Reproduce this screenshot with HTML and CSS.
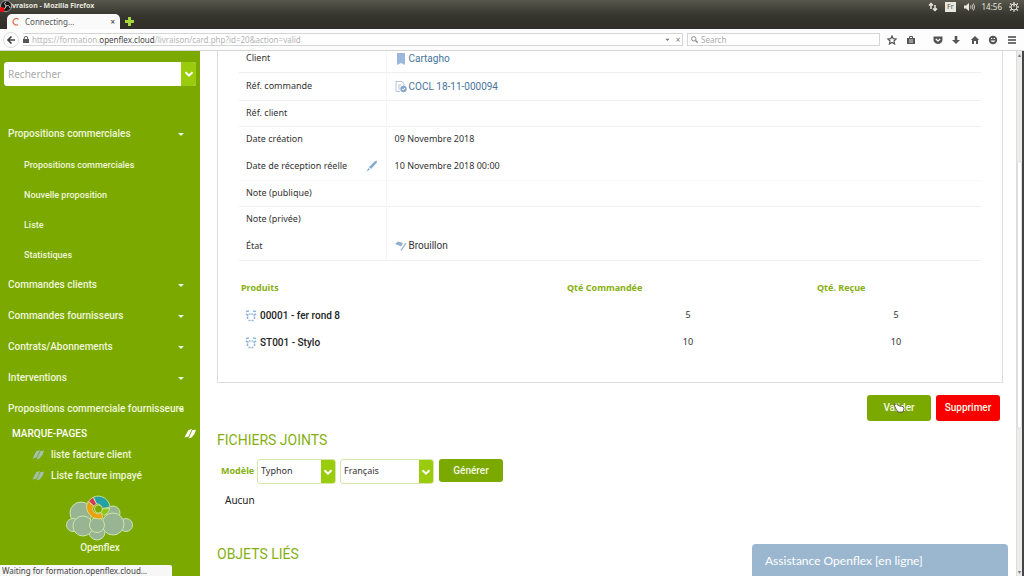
FILE: index.html
```html
<!DOCTYPE html>
<html lang="fr">
<head>
<meta charset="utf-8">
<title>Livraison - Mozilla Firefox</title>
<link rel="stylesheet" href="styles.css">
</head>
<body>
<svg class="defs" aria-hidden="true">
  <symbol id="caret" viewBox="0 0 10 10"><path d="M2 4h6L5 7z" fill="currentColor"/></symbol>
  <symbol id="chevron" viewBox="0 0 10 10"><path d="M1.500 3.200 5 6.600l3.500-3.400" fill="none" stroke="currentColor" stroke-width="2"/></symbol>
  <symbol id="book" viewBox="0 0 12 10"><path d="M4.500 1 8 0 4.500 7.500.500 8.500zM8.500 1 12 .800 10.500 5 7.500 8.500 4.500 9.500z" fill="currentColor"/></symbol>
  <symbol id="box" viewBox="0 0 12 12"><path d="M1 1.500l3-.5M8 1l3 .5M1 4l2.500 1.500M8.500 5.500 11 4M2.500 6.500V9M9.500 9V6.500M3.500 10.500h2M6.500 10.500h2M4 3.500l1.500 1M8 3.500l-1.500 1" fill="none" stroke="currentColor" stroke-width="1.500"/></symbol>
</svg>

<header class="browser">
  <div class="top">
    <div class="titlebar">
      <span class="title">Livraison - Mozilla Firefox</span>
      <div class="tray">
        <svg width="10" height="10" viewBox="0 0 10 10" fill="none" stroke="currentColor" stroke-width="1.500"><path d="M3 7V1.500M1 3.500l2-2 2 2M7 3v5.500M5 6.500l2 2 2-2"/></svg>
        <span class="lang">Fr</span>
        <svg width="12" height="10" viewBox="0 0 12 10"><path d="M1 3.500h2L6 1v8L3 6.500H1z" fill="currentColor"/><path d="M7.500 3.500q1 1.500 0 3M9 2.500q1.800 2.500 0 5M10.500 1.500q2.200 3.500 0 7" fill="none" stroke="currentColor" stroke-width=".8"/></svg>
        <span class="clock">14:56</span>
        <svg width="10" height="10" viewBox="0 0 10 10" fill="none" stroke="currentColor"><circle cx="5" cy="5" r="3"/><path d="M5 0v4.500M1.200 1.500 2.500 2.700M8.800 1.500 7.500 2.700M1.200 8.500 2.500 7.300M8.800 8.500 7.500 7.300M5 8.300v1.500M.200 5h1.500M8.300 5h1.500" stroke-width="1.300"/></svg>
      </div>
    </div>
    <div class="tabs">
      <div class="tab">
        <svg width="8" height="8" viewBox="0 0 8 8"><path d="M6.500 1.500A3.200 3.200 0 1 0 6 6.500" fill="none" stroke="#e0704a" stroke-width="1.200"/></svg>
        <span class="tab-name">Connecting…</span>
        <button class="plain" aria-label="Fermer l'onglet">×</button>
      </div>
      <button class="plain add" aria-label="Nouvel onglet"><svg width="9" height="9" viewBox="0 0 9 9"><path d="M3 0h3v3h3v3H6v3H3V6H0V3h3z" fill="#a5d63a"/></svg></button>
    </div>
  </div>
  <div class="toolbar">
    <button class="plain back" aria-label="Retour"><svg width="8" height="8" viewBox="0 0 8 8"><path d="M4.500.5 1 4l3.500 3.500M1 4h7" fill="none" stroke="#444" stroke-width="1.600"/></svg></button>
    <div class="urlbar">
      <svg width="6" height="7" viewBox="0 0 6 7"><path d="M0 3h6v4H0z" fill="#555"/><path d="M1.200 3V2q0-1.500 1.800-1.500T4.800 2v1" fill="none" stroke="#555"/></svg>
      <div class="url" role="textbox" aria-label="Adresse">https://formation.<b>openflex.cloud</b>/livraison/card.php?id=20&amp;action=valid</div>
      <svg width="7" height="7" viewBox="0 0 10 10" color="#777"><use href="#caret"/></svg>
      <button class="plain stop" aria-label="Arrêter">×</button>
    </div>
    <label class="websearch">
      <svg width="7" height="7" viewBox="0 0 7 7" fill="none" stroke="#888"><circle cx="2.800" cy="2.800" r="2.200"/><path d="M4.500 4.500 6.700 6.700" stroke-width="1.300"/></svg>
      <input type="text" placeholder="Search" aria-label="Search">
    </label>
    <div class="tools">
      <svg viewBox="0 0 10 10"><path d="M5 1l1.200 2.700 3 .3-2.200 2 .6 3L5 7.500 2.400 9 3 6 .8 4l3-.3z" fill="none" stroke="#555" stroke-width="1.200"/></svg>
      <svg viewBox="0 0 10 10"><path d="M1 3h8v6H1z" fill="#555"/><path d="M3.500 3V1.500h3V3" fill="none" stroke="#555"/><path d="M3 5h4M3 7h4" stroke="#fff" stroke-width=".8"/></svg>
      <i></i>
      <svg viewBox="0 0 10 10"><path d="M.5 1.500h9V5a4.500 4 0 0 1-9 0z" fill="#555"/><path d="M2.800 4 5 6l2.200-2" fill="none" stroke="#fff" stroke-width="1.200"/></svg>
      <svg viewBox="0 0 10 10"><path d="M3.700 1h2.600v4H9L5 9 1 5h2.700z" fill="#555"/></svg>
      <svg viewBox="0 0 10 10"><path d="M5 1 .8 5H2v4h2V6h2v3h2V5h1.200z" fill="#555"/></svg>
      <svg viewBox="0 0 10 10"><circle cx="5" cy="5" r="4.200" fill="#555"/><path d="M2.500 5.500q2.500 3 5 0z" fill="#fff"/><path d="M3 3.500h1.300M5.700 3.500H7" stroke="#fff"/></svg>
      <svg viewBox="0 0 10 10"><path d="M1 2h8M1 5h8M1 8h8" stroke="#444" stroke-width="1.600"/></svg>
    </div>
  </div>
</header>

<div class="page">
  <nav class="sidebar">
    <form class="search">
      <input type="text" placeholder="Rechercher" aria-label="Rechercher">
      <button type="button" aria-label="Options"><svg width="10" height="10"><use href="#chevron"/></svg></button>
    </form>
    <ul class="menu">
      <li><a href="#">Propositions commerciales</a><svg><use href="#caret"/></svg></li>
      <li class="sub"><a href="#">Propositions commerciales</a></li>
      <li class="sub"><a href="#">Nouvelle proposition</a></li>
      <li class="sub"><a href="#">Liste</a></li>
      <li class="sub"><a href="#">Statistiques</a></li>
      <li><a href="#">Commandes clients</a><svg><use href="#caret"/></svg></li>
      <li><a href="#">Commandes fournisseurs</a><svg><use href="#caret"/></svg></li>
      <li><a href="#">Contrats/Abonnements</a><svg><use href="#caret"/></svg></li>
      <li><a href="#">Interventions</a><svg><use href="#caret"/></svg></li>
      <li><a href="#">Propositions commerciale fournisseurs</a><svg><use href="#caret"/></svg></li>
    </ul>
    <div class="marks-title"><span>MARQUE-PAGES</span><svg width="12" height="10"><use href="#book"/></svg></div>
    <ul class="marks">
      <li><svg width="12" height="10"><use href="#book"/></svg><a href="#">liste facture client</a></li>
      <li><svg width="12" height="10"><use href="#book"/></svg><a href="#">Liste facture impayé</a></li>
    </ul>
    <div class="brand">
      <svg width="68" height="46" viewBox="0 0 68 46">
        <g fill="#97b592" stroke="#cfe3ad">
          <circle cx="15" cy="18" r="11"/><circle cx="47" cy="18" r="7"/><circle cx="7" cy="30" r="6.500"/><circle cx="60" cy="30" r="6.500"/><circle cx="31" cy="37" r="8"/><circle cx="17" cy="31" r="10"/><circle cx="47" cy="29" r="11"/><circle cx="31" cy="30" r="7.500"/>
        </g>
        <g stroke="#d8e8a8" stroke-width=".8">
          <path d="M27.500 2A12 12 0 0 1 44 12l-8 1.500A5 5 0 0 0 30.500 9z" fill="#25a0a5"/>
          <path d="M22.500 6 27 2.200 30.500 9 27.500 11z" fill="#d5365a"/>
          <path d="M22 6.500A12 12 0 0 0 37 23l-2-5.500A5 5 0 0 1 27.500 11z" fill="#eca00c"/>
          <path d="M44 13.500A11 11 0 0 1 38 20.500l-3-3 1-3.500z" fill="#8cc414"/>
          <circle cx="32.500" cy="14" r="4" fill="#7ba900"/>
        </g>
      </svg>
      <span>Openflex</span>
    </div>
    <div class="status">Waiting for formation.openflex.cloud…</div>
  </nav>

  <main class="content">
    <section class="card">
      <table class="details">
        <tr class="line"><th>Client</th><td><span class="val"><svg width="12" height="13" viewBox="0 0 12 13"><path d="M2 0h8v12L6 10 2 12z" fill="#9db6dc"/></svg><a href="#">Cartagho</a></span></td></tr>
        <tr class="line"><th>Réf. commande</th><td><span class="val"><svg width="12" height="12" viewBox="0 0 12 12"><path d="M1 .5h6l2 2.500v2M1 .5v10h4M3 4h3M3 6h2M3 8h2" fill="none" stroke="#a9bcd4" stroke-width=".9"/><circle cx="8.500" cy="8" r="3.200" fill="#86a6cb"/><path d="M7 8l1.200 1L10 7" fill="none" stroke="#fff"/></svg><a href="#">COCL 18-11-000094</a></span></td></tr>
        <tr class="line short"><th>Réf. client</th><td></td></tr>
        <tr class="short"><th>Date création</th><td>09 Novembre 2018</td></tr>
        <tr class="line faint"><th><span class="editable">Date de réception réelle<button class="plain" aria-label="Modifier"><svg width="12" height="12" viewBox="0 0 12 12"><path d="M8.500 1.500 10.500.500 11 2.500 5 9 3 7zM2.500 8l1.500 1.500L.5 11.500z" fill="#86a9cf"/></svg></button></span></th><td>10 Novembre 2018 00:00</td></tr>
        <tr class="line short"><th>Note (publique)</th><td></td></tr>
        <tr class="short"><th>Note (privée)</th><td></td></tr>
        <tr class="line"><th>État</th><td><span class="val"><svg width="12" height="11" viewBox="0 0 12 11"><path d="M0 3 3 .500 8 2 6 5.500 4 4.500z" fill="#8fb0cb"/><path d="M11 2 6 9.500" stroke="#8fb0cb" stroke-width="1.300"/></svg>Brouillon</span></td></tr>
      </table>
      <table class="products">
        <colgroup><col class="c1"><col class="c2"><col class="c3"></colgroup>
        <thead><tr><th>Produits</th><th>Qté Commandée</th><th>Qté. Reçue</th></tr></thead>
        <tbody>
          <tr><td><span class="prod"><svg width="12" height="12"><use href="#box"/></svg>00001 - fer rond 8</span></td><td class="qty">5</td><td class="qty">5</td></tr>
          <tr><td><span class="prod"><svg width="12" height="12"><use href="#box"/></svg>ST001 - Stylo</span></td><td class="qty">10</td><td class="qty">10</td></tr>
        </tbody>
      </table>
    </section>

    <div class="actions">
      <div class="pointed">
        <button class="btn">Valider</button>
        <svg class="cursor" width="12" height="10" viewBox="0 0 12 10"><path d="M1 1.500 3.500 1 6 3l4 .5 1 2L10 9H5L3 6z" fill="#fff" stroke="#444" stroke-width=".8"/></svg>
      </div>
      <button class="btn danger">Supprimer</button>
    </div>

    <h2>FICHIERS JOINTS</h2>
    <form class="generate">
      <label for="model">Modèle</label>
      <div class="pick model"><select id="model"><option>Typhon</option></select><svg><use href="#chevron"/></svg></div>
      <div class="pick language"><select aria-label="Langue"><option>Français</option></select><svg><use href="#chevron"/></svg></div>
      <button type="button" class="btn">Générer</button>
    </form>
    <p class="none">Aucun</p>
    <h2>OBJETS LIÉS</h2>
  </main>

  <div class="scrollbar"><span class="arrow">▴</span><span class="thumb"></span><span class="arrow">▾</span></div>
  <button class="assist">Assistance Openflex [en ligne]</button>
</div>
<svg class="recorder" width="12" height="12" viewBox="0 0 12 12"><circle cx="6" cy="6" r="5.500" fill="#181818" stroke="#ccc" stroke-width=".7"/><path d="M6 1.500q-3 2 0 4.500M10 8q-.5-3.500-4-2M2.500 9q3.500 0 3.500-3" fill="none" stroke="#ccc"/><circle cx="2" cy="9.500" r="2.500" fill="#e11"/></svg>
</body>
</html>
```
FILE: styles.css
```css
* { box-sizing: border-box; }
body {
  margin: 0;
  position: relative;
  display: flex;
  flex-direction: column;
  height: 100vh;
  overflow: hidden;
  background: #fff;
  color: #333;
  font: 9px/14px "Noto Sans", sans-serif;
}
.defs { position: absolute; width: 0; height: 0; }
a { color: inherit; text-decoration: none; }
ul { list-style: none; margin: 0; padding: 0; }
svg { flex: none; display: block; }
button, input, select { font: inherit; color: inherit; }
.plain { border: 0; padding: 0; background: none; }

/* Browser chrome */
.browser { font-size: 8px; line-height: 12px; }
.top { background: linear-gradient(#57574c, #35342d 16px, #302f2a); color: #e8e6dd; }
.titlebar { display: flex; justify-content: space-between; height: 13px; padding: 0 5px 0 6px; }
.title { font-weight: 700; font-size: 7px; }
.tray { display: flex; align-items: center; gap: 7px; font-size: 7px; }
.clock { font-size: 8px; }
.lang { background: #e8e6dd; color: #55554c; line-height: 10px; padding: 0 2px; }
.tabs { display: flex; align-items: center; height: 16px; gap: 5px; padding-left: 7px; }
.tab {
  display: flex; align-items: center; gap: 5px; width: 113px; height: 15px;
  align-self: flex-end; padding: 0 5px; background: #fafafa; color: #555; border-radius: 5px 5px 0 0;
}
.tab-name { flex: 1; }
.tab button { font-weight: 700; }
.toolbar {
  display: flex; align-items: center; height: 22px; gap: 4px; padding: 0 7px 0 3px;
  background: #fdfdfd; border-bottom: 1px solid #d5d5d5;
}
.back { display: grid; place-items: center; width: 16px; height: 16px; border: 1px solid #ddd; border-radius: 50%; }
.urlbar { flex: 1; display: flex; align-items: center; gap: 3px; height: 13px; border: 1px solid #d5d5d5; border-left: 0; background: #fff; }
.url { flex: 1; color: #b5b5b5; font-size: 8px; }
.url b { color: #444; font-weight: 400; }
.stop { color: #777; width: 8px; }
.websearch { display: flex; align-items: center; gap: 3px; width: 193px; height: 13px; padding: 0 3px; border: 1px solid #d5d5d5; background: #fff; }
.websearch input { min-width: 0; flex: 1; border: 0; padding: 0; outline: 0; background: none; height: 11px; }
::placeholder { color: #aaa; opacity: 1; }
.tools { display: flex; justify-content: space-between; width: 133px; padding-left: 3px; }
.tools svg { width: 10px; height: 10px; }
.recorder { position: absolute; left: 0; top: 0; }

/* Page */
.page { position: relative; flex: 1; display: flex; min-height: 0; border-right: 2px solid #444; }
.sidebar {
  position: relative; flex: none; width: 200px; padding: 11px 4px 0;
  background: #7ba900; color: #f0f6dc; font: 500 10px/14px Roboto, sans-serif;
}
.search { display: flex; height: 24px; margin-bottom: 32px; border-radius: 3px; overflow: hidden; background: #fff; }
.search input { flex: 1; min-width: 0; border: 0; padding: 0 4px; outline: 0; background: none; font: 10px "Noto Sans", sans-serif; }
.search button { display: grid; place-items: center; width: 15px; border: 0; padding: 0; background: #9acb0c; color: #fff; }
.menu li { display: flex; align-items: center; height: 31px; padding: 1px 10px 0 4px; white-space: nowrap; }
.menu li > a { flex: 1; min-width: 0; }
.menu svg { width: 10px; height: 10px; }
.menu .sub { height: 30px; padding-left: 20px; font-size: 9px; }
.marks-title { display: flex; align-items: center; justify-content: space-between; height: 20px; padding-left: 8px; color: #fff; }
.marks li { display: flex; align-items: center; gap: 7px; height: 21px; padding-left: 28px; }
.marks svg { color: #a3c0b0; }
.brand { display: flex; flex-direction: column; align-items: center; padding-top: 9px; }
.status {
  position: absolute; left: 0; bottom: 0; width: 172px; height: 11px; padding-left: 2px;
  background: #f7f7f7; color: #444; font: 8px/11px "Noto Sans", sans-serif; border-radius: 0 2px 0 0; white-space: nowrap;
}
.content { flex: 1; min-width: 0; padding: 0 13px 0 17px; }
.card { border: 1px solid #ddd; border-top: 0; padding: 0 21px 26px; }
table { width: 100%; border-collapse: collapse; table-layout: fixed; }
th, td { text-align: left; font-weight: 400; padding: 0; }
.details tr { height: 28px; }
.details .short { height: 26px; }
.details tr:first-child { height: 21px; }
.details th { width: 147px; padding-left: 7px; border-right: 1px solid #f5f5f5; }
.details td { padding-left: 8px; }
.line { border-bottom: 1px solid #f0f0f0; }
.faint { border-bottom-color: #f7f7f7; }
.details tr:first-child th { padding-bottom: 6px; }
.details tr:first-child td { padding-bottom: 5px; }
.val, .prod { display: flex; align-items: center; gap: 2px; padding-top: 1px; font-family: Roboto, "Noto Sans", sans-serif; font-size: 10px; }
.val a { color: #47749b; }
.editable { display: flex; align-items: center; justify-content: space-between; padding-right: 8px; white-space: nowrap; }
.products { margin-top: 14px; }
.products tr { height: 27px; }
.products th { padding-left: 2px; color: #86b012; font-weight: 700; }
.c2 { width: 250px; }
.c3 { width: 166px; }
.prod { padding-left: 6px; gap: 3px; color: #222; font-weight: 500; }
.prod svg { color: #8fb4dc; }
.qty { text-align: center; padding-right: 4px; }
.actions { display: flex; justify-content: flex-end; gap: 5px; padding: 12px 3px 0; }
.btn {
  width: 64px; height: 26px; padding: 0; border: 0; border-radius: 3px;
  background: #7ba900; color: #f4f8e6; font: 500 10px Roboto, sans-serif;
}
.danger { background: #f80000; }
.pointed { position: relative; display: flex; }
.cursor { position: absolute; left: 26px; top: 8px; }
h2 { margin: 8px 0 8px; font: 14px/22px Roboto, sans-serif; color: #86b012; }
.generate { display: flex; align-items: flex-start; gap: 4px; padding-left: 4px; }
.generate label { width: 32px; line-height: 24px; color: #86b012; font-weight: 700; }
.generate .btn { height: 23px; margin-left: 1px; }
.pick { position: relative; display: flex; height: 25px; border: 1px solid #d5e7a5; border-radius: 3px; overflow: hidden; }
.pick select { appearance: none; width: 100%; border: 0; padding: 0 18px 0 3px; background: linear-gradient(#9acb0c, #9acb0c) right / 14px 100% no-repeat; }
.pick svg { position: absolute; right: 2px; top: 7px; width: 10px; height: 10px; color: #fff; pointer-events: none; }
.model { width: 79px; }
.language { width: 94px; }
.none { margin: 9px 8px 0; font-size: 10px; color: #222; }
.none + h2 { margin-top: 36px; }
.scrollbar { display: flex; flex-direction: column; width: 6px; background: #ececea; border-left: 1px solid #ddd; font-size: 6px; line-height: 8px; text-align: center; color: #777; }
.thumb { height: 268px; margin: 102px 0 auto; background: #fff; border: 1px solid #ddd; border-radius: 3px; }
.assist {
  position: absolute; right: 14px; bottom: 0; width: 256px; height: 32px; padding: 0 13px;
  border: 0; border-radius: 4px 4px 0 0; background: #9bb7d0; color: #fff; text-align: left; font: 12px Lato, sans-serif;
}
```
